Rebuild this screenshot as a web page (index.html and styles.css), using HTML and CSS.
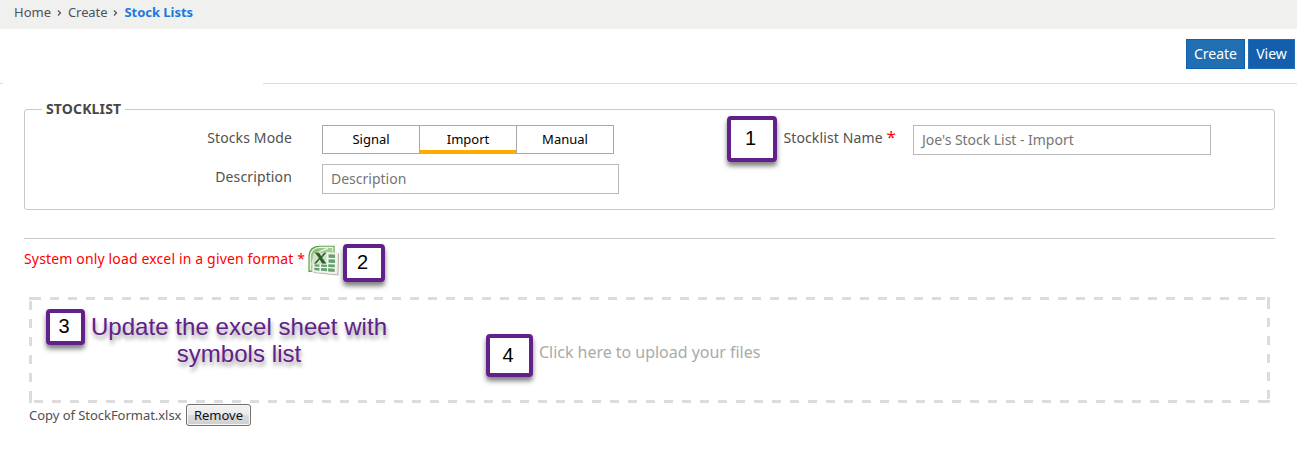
FILE: index.html
```
<!DOCTYPE html>
<html lang="en">
<head>
<meta charset="utf-8">
<title>Stock Lists</title>
<link rel="stylesheet" href="styles.css">
</head>
<body>
<nav class="crumbs"><span>Home</span><svg class="chev" viewBox="0 0 5 6"><path d="M1 .5 3.5 3 1 5.5"/></svg><span class="crumb-mid">Create</span><svg class="chev" viewBox="0 0 5 6"><path d="M1 .5 3.5 3 1 5.5"/></svg><b>Stock Lists</b></nav>
<div class="actions"><a class="action create">Create</a><a class="action view">View</a></div>
<div class="rule"><i class="rule-start"></i><i class="rule-rest"></i></div>
<main>
  <fieldset class="panel">
    <legend>STOCKLIST</legend>
    <div class="column">
      <div class="row"><label class="label">Stocks Mode</label><div class="modes"><span>Signal</span><span class="active">Import</span><span>Manual</span></div></div>
      <div class="row"><label class="label">Description</label><div class="input"><span class="t-desc">Description</span></div></div>
    </div>
    <div class="row name-row"><label class="label name-label">Stocklist Name <em>*</em></label><div class="input name-input"><span class="t-name">Joe's Stock List - Import</span></div></div>
  </fieldset>
  <div class="notice"><span class="warning">System only load excel in a given format *</span>
    <svg class="excel" viewBox="0 0 31 31">
      <defs><linearGradient id="g" x2="1" y2="1"><stop stop-color="#7fb070"/><stop offset=".5" stop-color="#a9cc9c"/><stop offset="1" stop-color="#5f9f50"/></linearGradient></defs>
      <path d="M1 26.500V10Q2 1.500 11 1.200H26V22L1 26.500Z" fill="url(#g)" stroke="#4b9a3a" stroke-width="1.1"/>
      <path d="M2.300 25.500V11Q3.500 2.600 12 2.400H24.800V7" fill="none" stroke="#eaf5e5" stroke-width="1.200"/>
      <path d="M4 20Q5 7 20 3.500" fill="none" stroke="#e4f0de" stroke-width="1.300"/>
      <path d="M5.500 27.500 29.800 29.800 30.500 8.500" fill="none" stroke="#b1b2ae" stroke-width="1.200"/>
      <path d="M18 7.200 29.800 7.800 29 29.200 4.200 26.600 5 18.500H18Z" fill="#f4f6ec" stroke="#dde2d4" stroke-width=".5"/>
      <path d="M5 8.500 18.500 7.500V19L4.500 18.500Z" fill="#cfe2c5"/>
      <path d="m20.500 9.200 6.500.3v3.500l-6.500-.2zM20.500 14.300l6.500.2V18l-6.500-.2zM20.300 19.300l6.500.2v2.800l-6.500-.3zM20.100 23.300l6.500.4v3.300l-6.500-.6zM13 19.500l6 .2V22l-6-.3zM13 23l6 .3v3l-6-.5zM6.500 19.300l5 .2v2.200l-5-.3zM6.200 22.700l5.300.3v2.700l-5.300-.6z" fill="#64a171"/>
      <path d="M7 7.700h4.200l2 3.500 3-3.500h2.100l-4.200 5 4.300 5.700h-4.300l-2.400-4-3.500 4H6l4.900-5.400Z" fill="#2c612c"/>
    </svg>
  </div>
  <div class="dropzone"><span class="prompt">Click here to upload your files</span></div>
  <div class="file"><span class="filename">Copy of StockFormat.xlsx</span><button class="remove" type="button">Remove</button></div>
</main>
<div class="marker m1">1</div>
<div class="marker m2">2</div>
<div class="marker m3">3</div>
<div class="marker m4">4</div>
<div class="callout">Update the excel sheet with<br>symbols list</div>
</body>
</html>
```
FILE: styles.css
```
* { box-sizing: border-box; }
body { margin: 0; height: 464px; position: relative; overflow: hidden; background: #fff; color: #505050; font: 14px/20px "Noto Sans", sans-serif; }
.crumbs { height: 29px; padding: 2px 0 0 14px; display: flex; background: #f0f0ee; font-size: 13px; color: #4d535c; }
.crumbs b { color: #1d78dc; letter-spacing: -.02px; }
.chev { width: 5px; height: 6px; margin: 8px 6px 0; fill: none; stroke: #555; stroke-width: 1.2; }
.crumb-mid { letter-spacing: -.1px; }
.actions { height: 54px; padding: 10px 2px 0 0; display: flex; justify-content: flex-end; gap: 3px; }
.action { height: 30px; line-height: 28px; text-align: center; color: #fff; }
.create { width: 59px; background: #1f6fb2; border: 1px solid #135fae; }
.view { width: 47px; background: #135fae; border: 1px solid #1f6fb2; }
.rule { display: flex; gap: 260px; height: 1px; }
.rule i { background: #ddd; }
.rule-start { width: 3px; }
.rule-rest { flex: 1; }
main { padding: 15px 22px 0 24px; }
.panel { margin: 0; min-width: 0; height: 111px; padding: 0; border: 1px solid #c9c9c9; border-radius: 3px; display: flex; }
.panel legend { height: 21px; margin-left: 17px; padding: 0 4px; font-weight: bold; color: #484848; letter-spacing: .15px; }
.column { width: 688px; padding-top: 5px; display: flex; flex-direction: column; gap: 10px; }
.row { display: flex; gap: 30px; align-items: flex-start; }
.label { width: 267px; text-align: right; padding-top: 3px; white-space: nowrap; letter-spacing: .13px; }
.modes { width: 292px; height: 29px; display: flex; border: 1px solid #a9a9a9; color: #000; font-size: 13px; }
.modes span { flex: 1; text-align: center; line-height: 26px; }
.modes .active { border: solid #a9a9a9; border-width: 0 1px; box-shadow: inset 0 -3px #ffab00, 0 1px #ffab00; }
.input { width: 297px; height: 30px; border: 1px solid #b9b9b9; padding: 4px 8px; color: #757575; }
.t-name { letter-spacing: -.03px; }
.name-row { padding-top: 5px; gap: 17px; }
.name-label { width: 183px; }
.name-input { width: 298px; }
em { color: red; font-style: normal; font-size: 17px; line-height: 16px; }
.notice { margin-top: 28px; height: 59px; border-top: 1px solid #c9c9c9; display: flex; align-items: flex-start; gap: 3px; color: #f00; }
.warning { width: 281px; padding-top: 10px; letter-spacing: .15px; white-space: nowrap; }
.excel { width: 31px; height: 31px; margin-top: 6px; }
.dropzone {
  --dash: #dcdcdc;
  --h: linear-gradient(90deg, var(--dash) 9px, transparent 9px);
  --v: linear-gradient(var(--dash) 9px, transparent 9px);
  --corner: linear-gradient(var(--dash), var(--dash));
  width: 1241px; height: 106px; margin-left: 5px; padding: 44px 0 0 510px;
  color: #aaa; font-size: 16px; line-height: 22px; letter-spacing: -.03px;
  background:
    var(--corner) 0 0 / 3px 3px no-repeat, var(--corner) 100% 0 / 3px 3px no-repeat,
    var(--corner) 0 100% / 3px 3px no-repeat, var(--corner) 100% 100% / 3px 3px no-repeat,
    var(--h) 3px 0 / 18px 3px repeat-x, var(--h) 5px 100% / 18px 3px repeat-x,
    var(--v) 0 4px / 3px 18px repeat-y, var(--v) 100% 3px / 3px 18px repeat-y;
}
.file { padding: 1px 0 0 5px; display: flex; gap: 4px; font-size: 13px; line-height: 22px; }
.filename { width: 153px; letter-spacing: -.04px; white-space: nowrap; }
.remove { width: 65px; height: 22px; padding: 0; border: 1px solid #707070; border-radius: 3px; color: #111; font: 13px/20px "Noto Sans", sans-serif; background: linear-gradient(#f2f2f2 0, #ebebeb 50%, #dcdcdc 50%, #cfcfcf); box-shadow: inset 0 0 0 1px #f8f8f8; }
.marker { position: absolute; display: flex; align-items: center; justify-content: center; padding: 0 3px 2px 0; border: 4px solid #62208a; border-radius: 4px; background: #fff; color: #000; font: 20px/20px "Liberation Sans", Arial, sans-serif; box-shadow: 0 4px 5px rgba(0,0,0,.5); }
.m1 { left: 727px; top: 116px; width: 50px; height: 46px; }
.m2 { left: 343px; top: 244px; width: 42px; height: 38px; }
.m3 { left: 46px; top: 309px; width: 39px; height: 36px; }
.m4 { left: 486px; top: 334px; width: 47px; height: 43px; }
.callout { position: absolute; left: 85px; top: 313px; width: 308px; text-align: center; white-space: nowrap; color: #62208a; font: 24px/27px "Liberation Sans", Arial, sans-serif; letter-spacing: .05px; text-shadow: 1px 4px 4px rgba(0,0,0,.4); }
```
